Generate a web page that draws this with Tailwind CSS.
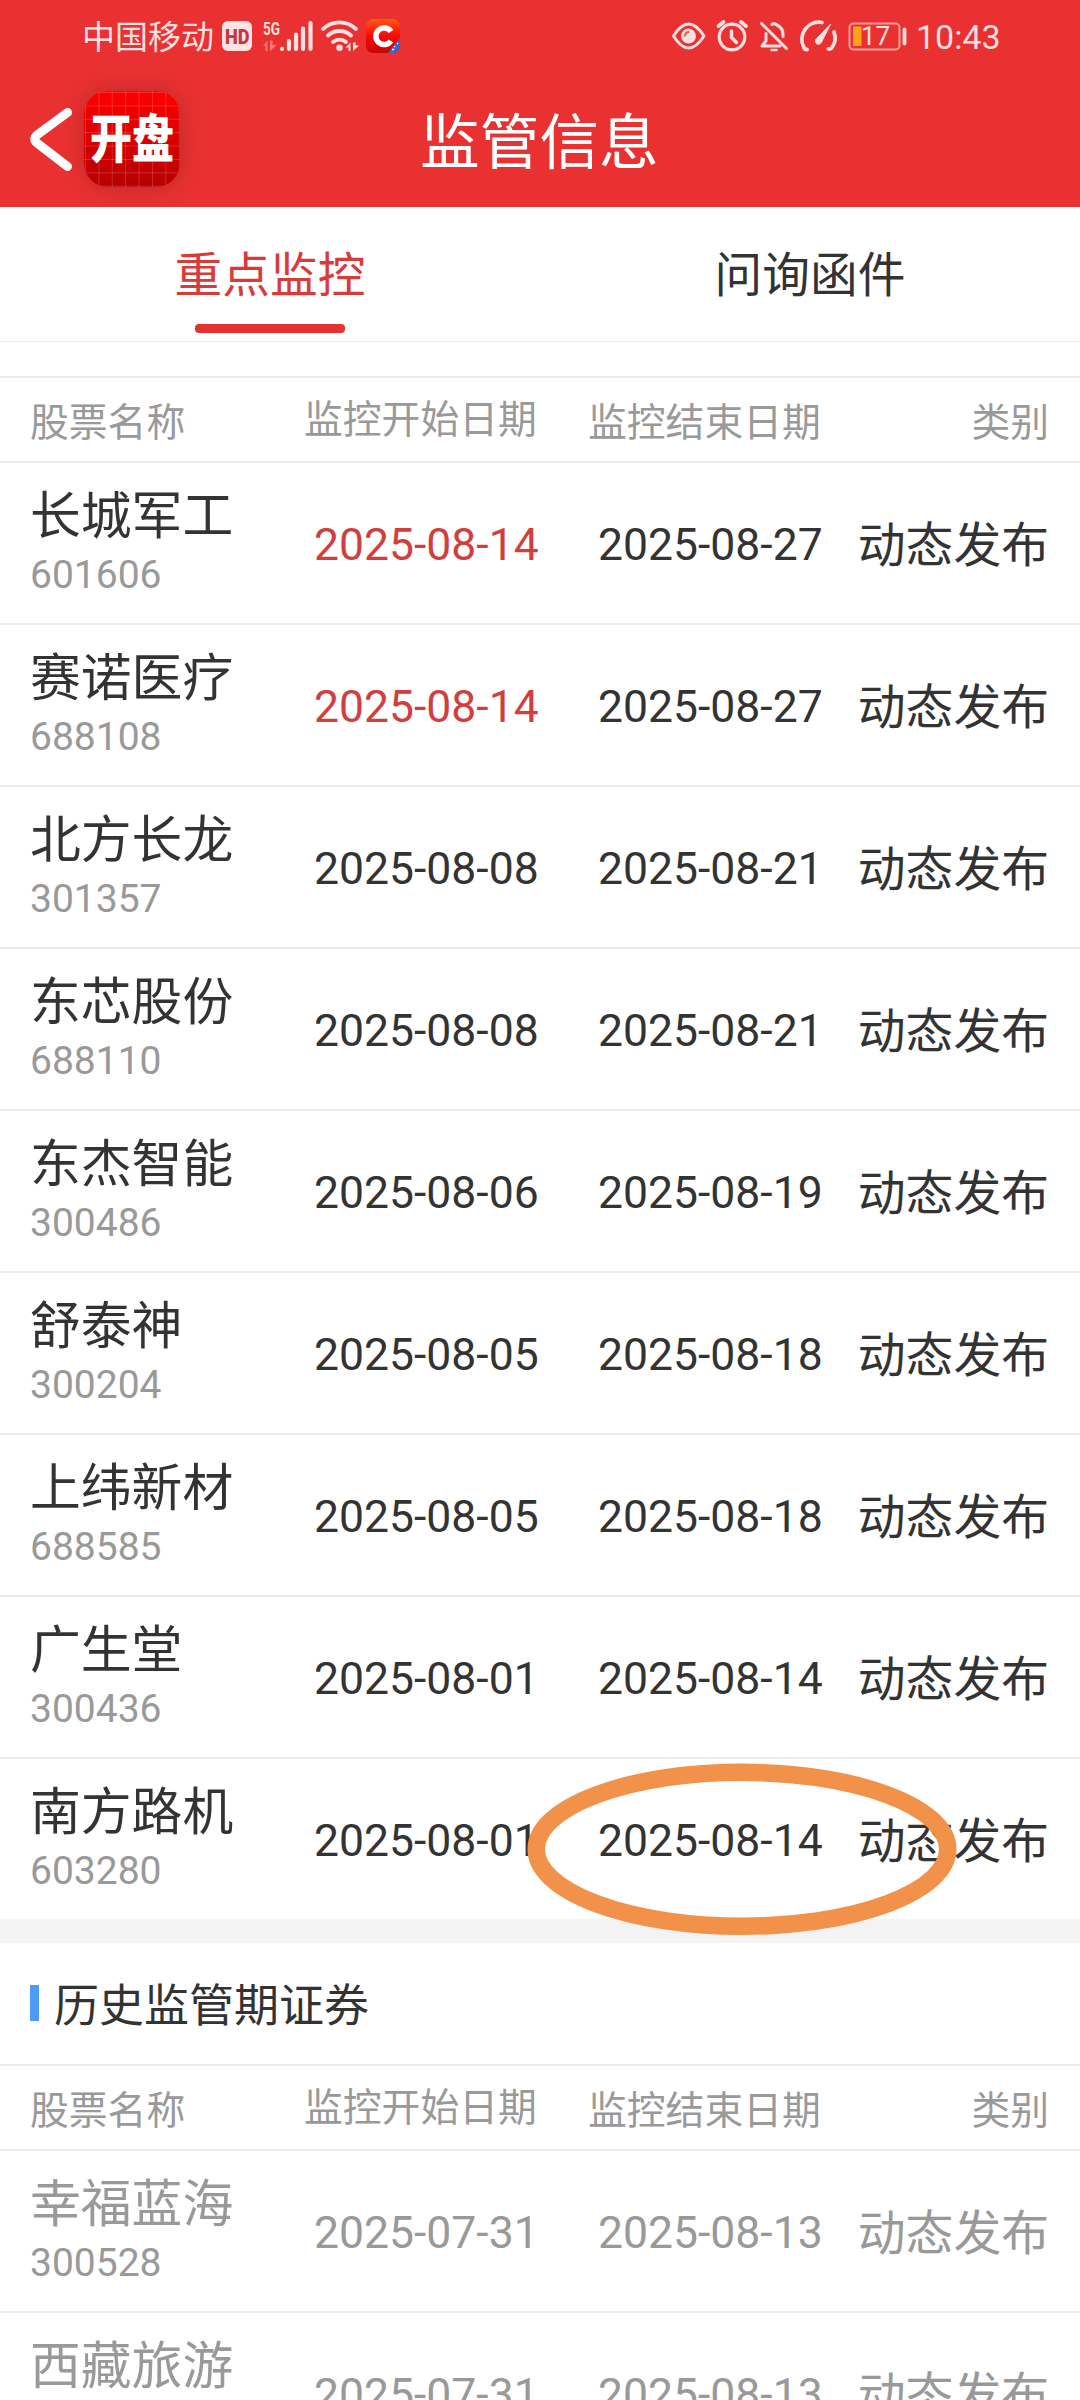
<!DOCTYPE html>
<html lang="zh-CN">
<head>
<meta charset="utf-8">
<title>监管信息</title>
<script src="https://cdn.jsdelivr.net/npm/@tailwindcss/browser@4"></script>
</head>
<body class="relative w-[1080px] h-[2400px] overflow-hidden bg-white text-[#333333] font-[Roboto,'Noto_Sans_CJK_SC',sans-serif]">
<header class="h-[207px] bg-[#e93131] text-white">
  <div class="flex h-[72px] items-center pl-[82px] pr-[81px] text-[#ffdfdf]">
    <span class="mt-[2px] text-[33px] leading-none">中国移动</span>
    <svg class="ml-[8px] h-[72px] w-[182px] shrink-0" viewBox="222 0 182 72" fill="none">
      <rect x="222" y="21" width="30" height="30" rx="6" fill="#ffe3e3"/>
      <text x="225" y="43.500" font-family="Roboto" font-weight="900" font-size="21" textLength="24.500" lengthAdjust="spacingAndGlyphs" fill="#c03a40">HD</text>
      <text x="263" y="34.500" font-family="Roboto" font-weight="700" font-size="19" textLength="17" lengthAdjust="spacingAndGlyphs" fill="#ffdfdf">5G</text>
      <path d="M263 46l4.500-5.500v10.500h-2v-5zM270 40.500l0 10.500 6.500-6h-4v-4.500z" fill="#ff7478"/>
      <path d="M282 48.800v.1M289 41v8M296 34.500v14.500M303 28.500v20.500M310.500 23v26" stroke="#ffdfdf" stroke-width="4.200" stroke-linecap="round"/>
      <path d="M323 29a24 24 0 0 1 33 0M328 35.500a17 17 0 0 1 23 0M333 42a10 10 0 0 1 13 0" stroke="#ffdfdf" stroke-width="3.800" stroke-linecap="round"/>
      <circle cx="339.500" cy="47.700" r="3.200" fill="#ffdfdf"/>
      <path d="M345.500 47.500l5-5v8.500h-2v-3.500zM353 42.500v8.500l6-5.500h-3.500v-3z" fill="#ffdfdf"/>
      <defs><linearGradient id="c" x1="0" y1="0" x2="0" y2="1"><stop stop-color="#ff5a14"/><stop offset=".5" stop-color="#f80808"/><stop offset="1" stop-color="#c90505"/></linearGradient></defs>
      <rect x="366" y="19" width="34" height="34" rx="7" fill="url(#c)"/>
      <path d="M400 38v8a7 7 0 0 1-7 7h-5z" fill="#3b66c4"/>
      <path d="M394 46l1 1M397 43l1 1M392 50l2-1" stroke="#dce6ff" stroke-width="1.500"/>
      <path d="M391 31.500a8.300 8.300 0 1 0 0 9.500" stroke="#fff" stroke-width="5.500"/>
    </svg>
    <svg class="ml-auto h-[72px] w-[240px] shrink-0" viewBox="670 0 240 72" fill="none" stroke="#ffdfdf" stroke-linecap="round" stroke-linejoin="round">
      <path d="M673.500 36q15-24 30.500 0q-15.500 24-30.500 0z" stroke-width="3"/>
      <circle cx="688.500" cy="36" r="7.500" fill="#ffdfdf" stroke="none"/>
      <path d="M685 35.500a4 4 0 0 1 3.500-3.500" stroke="#e95555" stroke-width="2"/>
      <circle cx="732" cy="37" r="12.800" stroke-width="3.200"/>
      <path d="M731.500 31v6.500l5 5" stroke-width="3.500"/>
      <path d="M718.500 26l5-4M741 22l5 4" stroke-width="3.800"/>
      <path d="M761.500 23.500l25 25" stroke-width="3"/>
      <path d="M766 33.500v7.500l-4 5h18M772 24.500a2.500 2.500 0 0 1 4 0q7 3 7 10v2" stroke-width="3"/>
      <path d="M771.500 50h5" stroke-width="2.500"/>
      <path d="M807 49.500a3 3 0 0 1-3-2a17 17 0 0 1 18-25M834 32a16.500 16.500 0 0 1-2 15.500a3 3 0 0 1-3.500 1.500" stroke-width="3.800"/>
      <path d="M830.500 24.500l-9 17.500a3.200 3.200 0 1 1-5-3.500z" fill="#ffdfdf" stroke-width="1"/>
      <rect x="849.500" y="23.500" width="50" height="26" rx="4" stroke="#ff9d9d" stroke-width="2"/>
      <path d="M853 26.500h8.500v19.500h-8.500z" fill="#ffa31a" stroke="none"/>
      <text x="861" y="45" stroke="none" fill="#ffdfdf" font-family="Roboto" font-size="26">17</text>
      <path d="M904.500 29.500v14" stroke-width="3.800"/>
    </svg>
    <span class="ml-[6px] mt-[2px] w-[83px] text-[34px] leading-none whitespace-nowrap">10:43</span>
  </div>
  <div class="grid h-[134px] grid-cols-[420px_240px_420px] items-start">
    <div class="flex pl-[28px] pt-[19px]">
      <svg class="mt-[15px] h-[68px] w-[56px]" viewBox="28 106 56 68" fill="none"><path d="M67.500 112.500L37 135q-4.500 4 0 8L67.500 166.500" stroke="#fff" stroke-width="9" stroke-linecap="round" stroke-linejoin="round"/></svg>
      <div class="grid h-[96px] w-[96px] place-items-center rounded-[24px] bg-[linear-gradient(#ffffff2b_1px,transparent_1px),linear-gradient(90deg,#ffffff2b_1px,transparent_1px),linear-gradient(#ff0000,#b50000)] bg-[size:13.400px_13.400px,13.400px_13.400px,100%_100%] bg-[position:1px_1px,1px_1px,0_0] shadow-[0_0_20px_#7a202066]"><span class="mt-[2px] scale-y-125 text-[42px] font-black leading-none">开盘</span></div>
    </div>
    <h1 class="mt-[43px] text-[59.700px] leading-none whitespace-nowrap">监管信息</h1>
  </div>
</header>
<nav class="grid h-[135px] grid-cols-2 border-b border-[#ececec] text-center text-[47.700px] leading-[138px]">
  <div class="flex flex-col items-center text-[#d93a3a]"><span class="h-[117px]">重点监控</span><i class="h-[9px] w-[150px] rounded-[4px] bg-[#e53130]"></i></div>
  <div>问询函件</div>
</nav>
<div class="h-[34px]"></div>
<main id="list"></main>
<svg class="absolute left-[520px] top-[1756px] h-[186px] w-[444px]" viewBox="520 1756 444 186" fill="none"><ellipse cx="742" cy="1849.300" rx="205.800" ry="77" stroke="#f29149" stroke-width="17.500"/></svg>
<script>
const head = `<div class="grid h-[87px] grid-cols-[274px_284px_1fr_auto] border-y-2 border-[#ebebeb] pl-[30px] pr-[31px] text-[38.800px] leading-[90px] text-[#999999]">
  <span>股票名称</span><span class="-mt-[3px]">监控开始日期</span><span>监控结束日期</span><span>类别</span></div>`;
const row = (name, code, from, to, tone, fromTone, line) => `<div class="grid h-[162px] grid-cols-[283px_284px_1fr_auto] border-b-2 pl-[30px] pr-[31px] text-[44.500px] leading-[164px] ${line} ${tone}">
  <div class="pt-[29px]"><div class="text-[50.800px] leading-[50px]">${name}</div><div class="mt-[11px] text-[39px] leading-[44px] text-[#999999]">${code}</div></div>
  <span class="pl-px ${fromTone}">${from}</span><span class="pl-px">${to}</span><span class="pt-px text-[47.800px]">动态发布</span></div>`;
const current = [
  ['长城军工','601606','2025-08-14','2025-08-27'],
  ['赛诺医疗','688108','2025-08-14','2025-08-27'],
  ['北方长龙','301357','2025-08-08','2025-08-21'],
  ['东芯股份','688110','2025-08-08','2025-08-21'],
  ['东杰智能','300486','2025-08-06','2025-08-19'],
  ['舒泰神','300204','2025-08-05','2025-08-18'],
  ['上纬新材','688585','2025-08-05','2025-08-18'],
  ['广生堂','300436','2025-08-01','2025-08-14'],
  ['南方路机','603280','2025-08-01','2025-08-14']];
const past = [['幸福蓝海','300528','2025-07-31','2025-08-13'],['西藏旅游','','2025-07-31','2025-08-13']];
document.getElementById('list').innerHTML = head
  + current.map((r, i) => row(...r, 'text-[#333333]', i < 2 ? 'text-[#d03e3e]' : '', i < 8 ? 'border-[#ebebeb]' : 'border-[#f3f3f3]')).join('')
  + `<div class="h-[22px] bg-[#f3f3f3]"></div>
     <h2 class="flex h-[121px] items-center gap-[15px] pl-[30px] text-[45px]"><i class="-mt-[2px] h-[36px] w-[9px] bg-[#4c9bf5]"></i><span class="mt-[7px]">历史监管期证券</span></h2>`
  + head
  + past.map(r => row(...r, 'text-[#999999]', '', 'border-[#ebebeb]')).join('');
</script>
</body>
</html>
